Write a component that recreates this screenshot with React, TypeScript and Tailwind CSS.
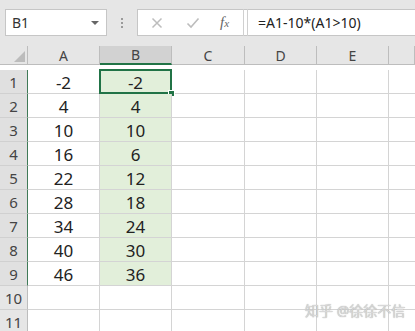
const cols = ["A", "B", "C", "D", "E", ""];
const colA = ["-2", "4", "10", "16", "22", "28", "34", "40", "46", "", ""];
const colB = ["-2", "4", "10", "6", "12", "18", "24", "30", "36", "", ""];

const font = { fontFamily: '"Noto Sans", "Noto Sans CJK SC", sans-serif' };

export default function App() {
  return (
    <div className="relative w-[415px] h-[331px] overflow-hidden bg-white text-[#222]" style={font}>
      {/* formula bar area */}
      <div className="h-[46px] bg-[#e6e6e6] flex items-start pt-[9px] pl-[5px]">
        <div className="w-[102px] h-[27px] bg-white border border-[#c6c6c6] flex items-center justify-between pl-[6px] pr-[7px]">
          <span className="text-[14px] text-[#333]">B1</span>
          <span className="w-0 h-0 border-l-[4px] border-r-[4px] border-t-[4px] border-l-transparent border-r-transparent border-t-[#666]" />
        </div>
        <div className="w-[30px] h-[27px] flex flex-col items-center justify-center gap-[2px]">
          <span className="w-[2px] h-[2px] bg-[#9a9a9a]" />
          <span className="w-[2px] h-[2px] bg-[#9a9a9a]" />
          <span className="w-[2px] h-[2px] bg-[#9a9a9a]" />
        </div>
        <div className="flex-1 h-[27px] bg-white border border-[#c6c6c6] border-r-0 flex items-center">
          <svg width="12" height="12" viewBox="0 0 12 12" className="ml-[13px]">
            <path d="M1.5 1.5 L10.5 10.5 M10.5 1.5 L1.5 10.5" stroke="#bdbdbd" strokeWidth="1.5" />
          </svg>
          <svg width="14" height="12" viewBox="0 0 14 12" className="ml-[23px]">
            <path d="M1.5 6.5 L5 10 L12.5 1.5" stroke="#bdbdbd" strokeWidth="1.6" fill="none" />
          </svg>
          <span className="ml-[20px] text-[15px] italic text-[#666]" style={{ fontFamily: '"Liberation Serif", serif' }}>
            f<span className="text-[11px]">x</span>
          </span>
          <div className="w-[5px] h-[27px] border-l border-r border-[#d0d0d0] ml-[14px]" />
          <span className="ml-[10px] text-[14px] text-[#222]">=A1-10*(A1&gt;10)</span>
        </div>
      </div>

      {/* sheet */}
      <div className="grid grid-cols-[28px_72px_72px_73px_72px_72px_26px] auto-rows-[24px]">
        <div className="h-[19px] bg-[#e6e6e6] border-r border-b border-[#bdbdbd] flex items-end justify-end pr-[2px] pb-[2px]">
          <span className="w-0 h-0" style={{ borderBottom: "11px solid #bcbcbc", borderLeft: "11px solid transparent" }} />
        </div>
        {cols.map((c) => (
          <div
            key={c || "f"}
            className={`h-[19px] border-r flex items-center justify-center text-[14px] text-[#444] ${
              c === "B" ? "bg-[#d2d2d2] border-b-2 border-b-[#217346] border-r-[#bdbdbd]" : "bg-[#e6e6e6] border-b border-[#bdbdbd]"
            }`}
          >
            {c}
          </div>
        ))}

        {colA.map((a, i) => {
          const sel = i < 9;
          return [
            <div
              key={"r" + i}
              className={`border-b border-[#d0d0d0] flex items-center justify-center text-[15px] text-[#444] pt-[2px] ${
                sel ? "bg-[#e0e0e0] border-r border-r-[#3f7a57]" : "bg-[#e6e6e6] border-r border-r-[#bdbdbd]"
              }`}
            >
              {i + 1}
            </div>,
            <div key={"a" + i} className="border-r border-b border-[#d4d4d4] flex items-center justify-center text-[17px] pt-[2px]">
              {a}
            </div>,
            <div
              key={"b" + i}
              className={`relative border-r border-b border-[#d4d4d4] flex items-center justify-center text-[17px] pt-[2px] ${
                sel ? "bg-[#e2efda]" : ""
              }`}
            >
              {colB[i]}
              {i === 0 && (
                <>
                  <div className="absolute left-[-1px] top-[-1px] w-[73px] h-[25px] border-2 border-[#217346]" />
                  <div className="absolute right-[-4px] bottom-[-4px] w-[7px] h-[7px] bg-[#217346] border border-white" />
                </>
              )}
            </div>,
            <div key={"c" + i} className="border-r border-b border-[#d4d4d4]" />,
            <div key={"d" + i} className="border-r border-b border-[#d4d4d4]" />,
            <div key={"e" + i} className="border-r border-b border-[#d4d4d4]" />,
            <div key={"f" + i} className="border-b border-[#d4d4d4]" />,
          ];
        })}
      </div>

      {/* watermark */}
      <div className="absolute left-[305px] top-[302px] whitespace-nowrap text-[14px] leading-[18px] text-[#d8d8d8]" style={{ textShadow: "0 0 1px #9a9a9a" }}>
        知乎 @徐徐不信
      </div>
    </div>
  );
}
